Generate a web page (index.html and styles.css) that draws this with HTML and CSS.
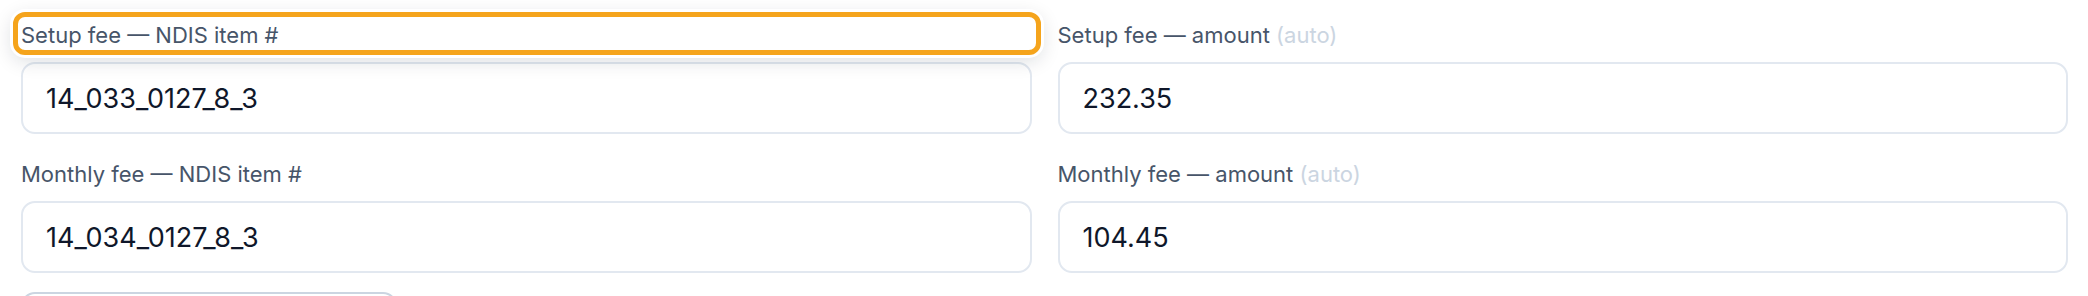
FILE: index.html
```html
<!DOCTYPE html>
<html lang="en">
<head>
  <meta charset="UTF-8">
  <title>Plan fees</title>
  <link rel="stylesheet" href="styles.css">
</head>
<body>
  <div class="container">
    <div class="fee-grid">
      <div class="field">
        <label class="field-label is-highlighted" for="setupItem">Setup fee — NDIS item #</label>
        <input type="text" id="setupItem" value="14_033_0127_8_3" />
      </div>
      <div class="field">
        <label class="field-label" for="setupAmount">Setup fee — amount <span class="hint">(auto)</span></label>
        <input type="text" id="setupAmount" value="232.35" readonly />
      </div>
      <div class="field">
        <label class="field-label" for="monthlyItem">Monthly fee — NDIS item #</label>
        <input type="text" id="monthlyItem" value="14_034_0127_8_3" />
      </div>
      <div class="field">
        <label class="field-label" for="monthlyAmount">Monthly fee — amount <span class="hint">(auto)</span></label>
        <input type="text" id="monthlyAmount" value="104.45" readonly />
      </div>
    </div>
    <button type="button" class="secondary-btn" aria-label="Recalculate amounts"></button>
  </div>
</body>
</html>
```

FILE: styles.css
```css
body {
  font-family: Inter, "Noto Sans", Arial, sans-serif;
  background-color: #fff;
  color: #0f172a;
  margin: 0;
  padding: 0;
}

.container {
  padding: 20px 20px 0 21px;
}

.fee-grid {
  display: grid;
  grid-template-columns: 1fr 1fr;
  column-gap: 26px;
  row-gap: 25px;
}

.field {
  display: flex;
  flex-direction: column;
}

.field-label {
  position: relative;
  font-size: 22px;
  line-height: 30px;
  color: #475569;
  margin-bottom: 12px;
}

.field-label .hint {
  color: #cbd5e1;
}

/* focus ring drawn over the label */
.field-label.is-highlighted::after {
  content: "";
  position: absolute;
  top: -8px;
  bottom: -5px;
  left: -8px;
  right: -9px;
  border: 5px solid #f5a41c;
  border-radius: 12px;
  box-shadow: 0 0 0 3px #fff, 0 5px 20px rgba(15, 23, 42, 0.16);
  z-index: 2;
}

.field input {
  box-sizing: border-box;
  height: 72px;
  padding: 0 23px;
  border: 2px solid #e2e8f0;
  border-radius: 14px;
  font-family: inherit;
  font-size: 27px;
  color: #0f172a;
  background: #fff;
  outline: none;
}

.secondary-btn {
  display: block;
  box-sizing: border-box;
  width: 376px;
  height: 52px;
  margin-top: 19px;
  border: 2px solid #cbd5e1;
  border-radius: 14px;
  background: #fff;
}
```
